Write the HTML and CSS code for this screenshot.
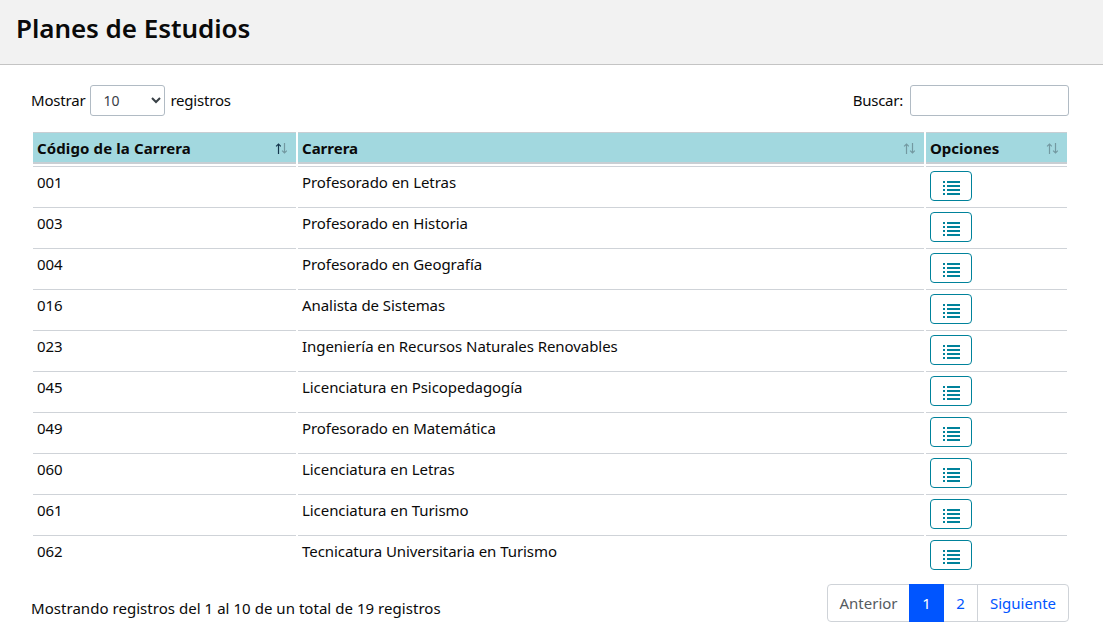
FILE: index.html
```html
<!DOCTYPE html>
<html lang="es">
<head>
<meta charset="utf-8">
<title>Planes de Estudios</title>
<link rel="stylesheet" href="styles.css">
</head>
<body>
<svg class="sprite" aria-hidden="true">
  <symbol id="list" viewBox="0 0 17 14"><path d="M0 0h2v2H0zM4 0h13v2H4zM0 4h2v2H0zM4 4h13v2H4zM0 8h2v2H0zM4 8h13v2H4zM0 12h2v2H0zM4 12h13v2H4z"/></symbol>
  <symbol id="up" viewBox="0 0 6 11"><path d="M3.500 11V1M1.100 3.400 3.500 1l2.400 2.400" fill="none" stroke="currentColor" stroke-width="1.200"/></symbol>
  <symbol id="down" viewBox="0 0 6 11"><path d="M3.500 0v10M1.100 7.600 3.500 10l2.400-2.400" fill="none" stroke="currentColor" stroke-width="1.200"/></symbol>
</svg>
<header class="page-header"><h1>Planes de Estudios</h1></header>
<main class="content">
  <div class="controls">
    <label class="length"><span>Mostrar</span> <select><option>10</option></select> <span>registros</span></label>
    <label class="search"><span>Buscar:</span> <input type="search"></label>
  </div>
  <table class="plans">
    <colgroup><col class="col-code"><col class="col-name"><col class="col-opts"></colgroup>
    <thead>
      <tr>
        <th><div class="head"><span class="h-code">Código de la Carrera</span><span class="sort"><svg class="active"><use href="#up"/></svg><svg><use href="#down"/></svg></span></div></th>
        <th><div class="head"><span>Carrera</span><span class="sort"><svg><use href="#up"/></svg><svg><use href="#down"/></svg></span></div></th>
        <th><div class="head"><span>Opciones</span><span class="sort"><svg><use href="#up"/></svg><svg><use href="#down"/></svg></span></div></th>
      </tr>
    </thead>
    <tbody>
      <tr><td>001</td><td>Profesorado en Letras</td><td><button class="btn"><svg><use href="#list"/></svg></button></td></tr>
      <tr><td>003</td><td>Profesorado en Historia</td><td><button class="btn"><svg><use href="#list"/></svg></button></td></tr>
      <tr><td>004</td><td>Profesorado en Geografía</td><td><button class="btn"><svg><use href="#list"/></svg></button></td></tr>
      <tr><td>016</td><td>Analista de Sistemas</td><td><button class="btn"><svg><use href="#list"/></svg></button></td></tr>
      <tr><td>023</td><td>Ingeniería en Recursos Naturales Renovables</td><td><button class="btn"><svg><use href="#list"/></svg></button></td></tr>
      <tr><td>045</td><td>Licenciatura en Psicopedagogía</td><td><button class="btn"><svg><use href="#list"/></svg></button></td></tr>
      <tr><td>049</td><td>Profesorado en Matemática</td><td><button class="btn"><svg><use href="#list"/></svg></button></td></tr>
      <tr><td>060</td><td>Licenciatura en Letras</td><td><button class="btn"><svg><use href="#list"/></svg></button></td></tr>
      <tr><td>061</td><td>Licenciatura en Turismo</td><td><button class="btn"><svg><use href="#list"/></svg></button></td></tr>
      <tr><td>062</td><td>Tecnicatura Universitaria en Turismo</td><td><button class="btn"><svg><use href="#list"/></svg></button></td></tr>
    </tbody>
  </table>
  <div class="footer">
    <div class="info">Mostrando registros del 1 al 10 de un total de 19 registros</div>
    <nav class="pages"><span class="page prev">Anterior</span><span class="page current">1</span><span class="page two">2</span><span class="page next">Siguiente</span></nav>
  </div>
</main>
</body>
</html>
```
FILE: styles.css
```css
* { box-sizing: border-box; }
body {
  margin: 0;
  background: #fff;
  color: #0a0a0a;
  font: 15px/24px "Segoe UI", "Noto Sans", sans-serif;
  letter-spacing: -0.06px;
}
.sprite { display: none; }
.page-header {
  height: 65px;
  padding: 12px 16px 0;
  background: #f2f2f2;
  border-bottom: 1px solid #c4c4c4;
}
h1 { margin: 0; font-size: 26px; line-height: 32px; font-weight: 600; letter-spacing: -0.05px; }
.content { padding: 20px 34px 0 31px; }
.controls { display: flex; justify-content: space-between; height: 31px; }
.length, .search { display: flex; align-items: center; letter-spacing: -0.2px; }
.length span, .search span { padding-bottom: 2px; }
.length { gap: 5px; }
.search { gap: 7px; letter-spacing: -0.25px; }
select, input {
  height: 31px;
  margin: 0;
  border: 1px solid #b1bbc4;
  border-radius: 3px;
  background: #fff;
  color: #394046;
  font: 14px "Segoe UI", "Noto Sans", sans-serif;
}
select { width: 75px; padding: 0 0 0 8px; }
input { width: 159px; }
.plans {
  width: 1038px;
  margin-top: 14px;
  table-layout: fixed;
  border-collapse: separate;
  border-spacing: 2px;
}
.col-code { width: 263px; }
.col-name { width: 626px; }
.col-opts { width: 141px; }
th {
  height: 32px;
  padding: 0 9px 0 4px;
  background: #a2d8df;
  border-top: 1px solid #c8ced3;
  border-bottom: 2px solid #c8ced3;
  text-align: left;
  font-weight: 700;
  letter-spacing: 0;
}
.head { display: flex; justify-content: space-between; align-items: center; height: 29px; }
.h-code { letter-spacing: 0.12px; }
.sort { display: flex; padding-top: 2px; color: #7399a1; }
.sort svg { width: 6px; height: 11px; }
.sort .active { color: #14364c; }
td {
  height: 39px;
  padding: 3px 4px 4px;
  border-top: 1px solid #cfd3d8;
  vertical-align: top;
}
.btn {
  display: flex;
  width: 42px;
  height: 30px;
  margin-top: 1px;
  padding: 9px 0 0 12px;
  border: 1px solid #00829b;
  border-radius: 4px;
  background: #fff;
  color: #00829b;
}
.btn svg { width: 17px; height: 14px; fill: currentColor; }
.footer { display: flex; justify-content: space-between; margin-top: 8px; }
.info { padding-top: 12px; letter-spacing: 0.04px; }
.pages { display: flex; height: 38px; border: 1px solid #cfd3d8; border-radius: 4px; letter-spacing: 0; }
.page { display: flex; align-items: center; justify-content: center; color: #0055ff; padding-bottom: 1px; }
.prev { width: 81px; color: #555b60; }
.current { width: 35px; margin: -1px 0; background: #0055ff; color: #fff; }
.two { width: 33px; }
.next { width: 91px; border-left: 1px solid #cfd3d8; }
```
